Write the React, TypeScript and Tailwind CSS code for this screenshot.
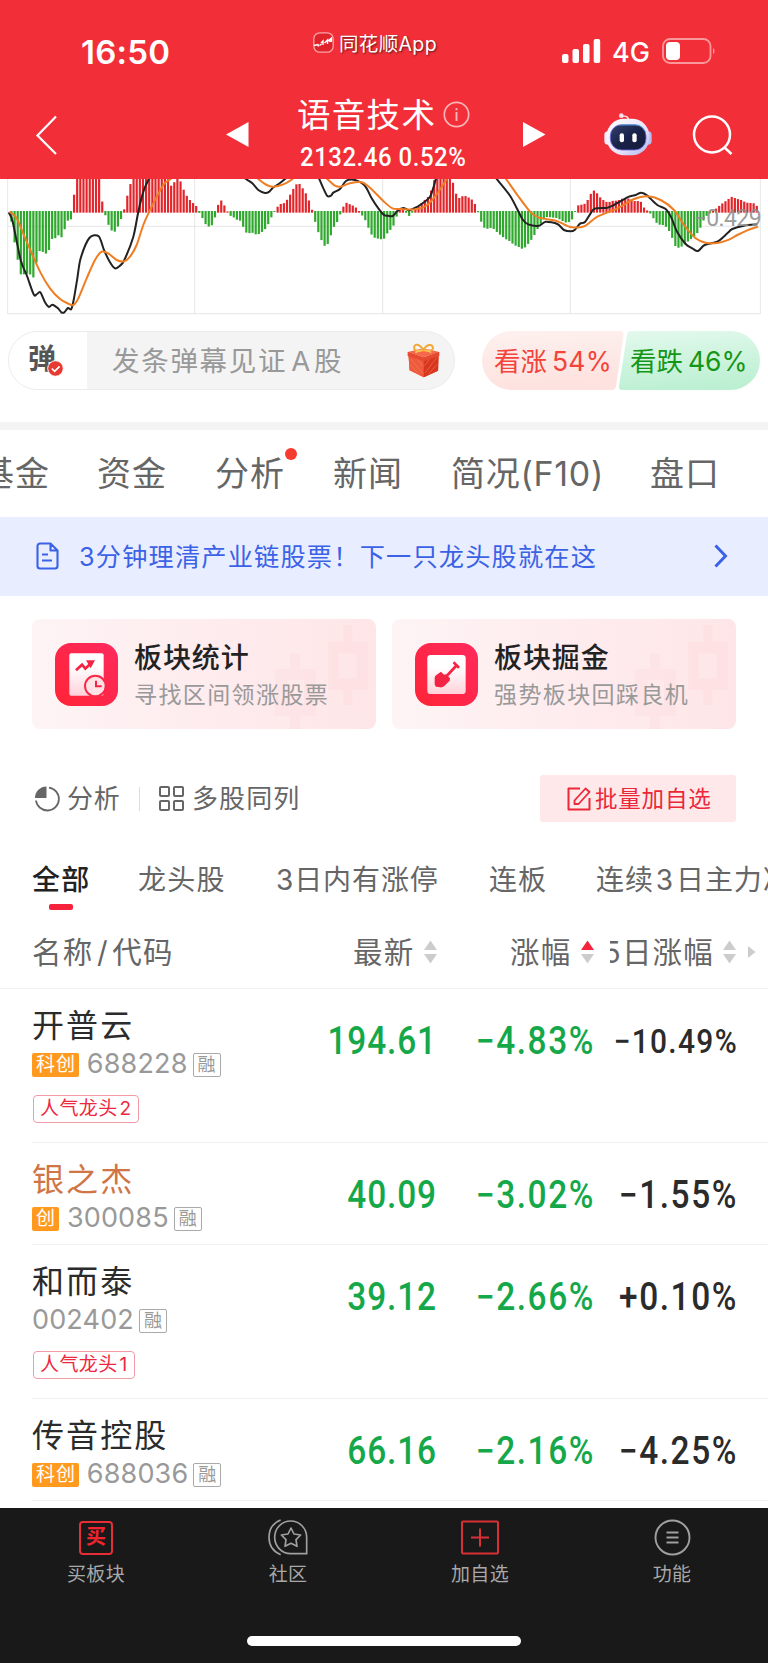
import React from 'react';

/* MACD histogram samples as [x, y] pairs; the zero line sits at y = 110. */
const HISTOGRAM: number[] = [
  34,140,43,200,52,250,61,298,71,298,80,296,90,298,99,311,108,268,117,228,127,230,137,236,146,228,155,192,165,190,174,180,183,190,193,165,202,137,212,137,
  220,75,229,0,296,0,305,73,315,118,324,147,333,165,342,173,352,158,361,137,370,113,380,68,389,35,398,0,500,0,510,33,520,30,529,0,538,10,548,38,557,58,567,72,576,83,586,87,595,110,
  604,122,614,145,623,154,632,156,642,140,651,97,661,73,670,86,680,105,689,122,698,124,708,135,717,132,727,150,736,172,746,175,755,172,765,178,775,178,784,172,793,165,802,153,812,130,821,115,
  828,102,838,87,848,87,857,80,867,65,876,48,885,32,895,22,904,35,914,48,924,70,933,93,942,128,951,162,960,185,970,210,979,216,989,193,998,160,1008,148,1017,128,
  1026,103,1036,82,1045,86,1055,90,1064,95,1073,102,1083,118,1092,128,1101,147,1110,172,1120,187,1130,190,1139,192,1150,194,1156,185,1166,167,1176,162,1185,140,1194,110,1204,100,1214,105,1223,125,1232,120,
  1242,105,1252,97,1262,88,1270,78,1280,70,1289,60,1298,30,1307,0,1352,0,1363,38,1372,70,1382,68,1391,60,1401,66,1410,69,1419,77,1429,95,1438,126,1447,150,1456,163,1466,160,1475,158,1485,165,1494,175,
  1504,182,1513,190,1522,195,1532,200,1541,210,1550,213,1560,218,1569,223,1579,213,1588,202,1597,190,1607,173,1616,155,1626,140,1635,128,1645,125,1654,128,1664,128,1673,130,1683,136,1692,140,1700,144,1709,140,1719,130,
  1728,102,1737,87,1747,90,1756,85,1766,70,1775,50,1785,45,1794,60,1803,70,1812,77,1822,82,1832,80,1842,76,1852,78,1862,72,1872,70,1882,70,1892,72,1902,78,1912,78,1922,80,1932,98,1942,107,
  1952,117,1962,133,1972,147,1982,150,1992,150,2002,160,2012,176,2022,205,2029,220,2039,217,2049,213,2059,203,2069,195,2079,188,2089,177,2095,170,2104,152,2113,130,2122,120,2132,113,
  2142,105,2152,98,2162,88,2172,82,2182,74,2196,65,2206,70,2216,73,2226,76,2236,82,2246,84,2256,84,2266,86,2272,96,
];

const ZERO = 110;
const PITCH = 9.395;

function sample(x: number): number {
  for (let i = 2; i < HISTOGRAM.length; i += 2) {
    if (HISTOGRAM[i] >= x) {
      const x0 = HISTOGRAM[i - 2];
      const y0 = HISTOGRAM[i - 1];
      const t = (x - x0) / (HISTOGRAM[i] - x0);
      return y0 + (HISTOGRAM[i + 1] - y0) * t;
    }
  }
  return 96;
}

/* Smooth polyline through points (Catmull-Rom to Bezier). */
function curve(p: number[]): string {
  const n = p.length / 2;
  const at = (i: number) => {
    const k = Math.max(0, Math.min(n - 1, i));
    return [p[k * 2], p[k * 2 + 1]];
  };
  let d = `M${p[0]} ${p[1]}`;
  for (let i = 0; i < n - 1; i++) {
    const [a, b, c, e] = [at(i - 1), at(i), at(i + 1), at(i + 2)];
    d += `C${b[0] + (c[0] - a[0]) / 7} ${b[1] + (c[1] - a[1]) / 7} ${c[0] - (e[0] - b[0]) / 7} ${c[1] - (e[1] - b[1]) / 7} ${c[0]} ${c[1]}`;
  }
  return d;
}

const DIF: number[][] = [
  [26,112,38,140,62,255,80,300,101,358,110,358,121,352,135,382,147,396,157,389,174,400,184,412,193,412,204,399,214,402,222,370,232,310,242,250,268,189,296,184,312,225,330,262,345,280,360,272,373,255,400,185,415,110,430,50,445,15,455,0],
  [725,0,738,12,757,25,775,45,795,54,808,50,820,37,835,28,855,12,870,2],
  [953,0,958,12,970,40,982,63,993,62,1000,53,1020,42,1038,18,1060,14,1085,24,1100,40,1115,70,1135,100,1152,120,1164,122,1178,123,1194,106,1210,99,1227,106,1242,100,1260,90,1290,65,1307,14,1312,0],
  [1480,0,1490,12,1532,65,1567,132,1585,148,1617,152,1637,140,1672,147,1692,165,1712,169,1724,165,1740,146,1754,142,1770,118,1784,101,1822,98,1842,90,1887,65,1907,60,1924,53,1942,62,1972,90,1997,102,2014,128,2032,172,2057,207,2077,220,2094,228,2114,210,2152,200,2182,175,2197,162,2232,152,2272,148],
];
const DEA: number[][] = [
  [28,110,50,130,80,200,120,290,150,340,180,372,205,386,220,390,235,370,260,310,285,255,305,230,325,235,350,255,372,259,390,245,410,210,430,150,455,95,490,30,512,12,520,2],
  [765,0,775,12,800,30,820,35,850,28,875,14,890,0],
  [970,0,982,12,1005,32,1022,35,1050,25,1085,22,1110,38,1152,80,1177,100,1202,102,1247,103,1282,90,1312,55,1340,12,1346,0],
  [1506,0,1518,12,1552,60,1592,112,1617,128,1662,136,1682,143,1712,156,1752,154,1792,125,1852,100,1902,72,1942,64,1982,75,2022,105,2052,150,2087,190,2117,203,2152,204,2187,194,2212,180,2242,166,2274,155],
];

function MacdChart() {
  const bars = Array.from({ length: 239 }, (_, i) => 34 + i * PITCH);
  return (
    <div className="relative h-[136px] w-full shrink-0 overflow-hidden bg-white">
      <svg className="block" width="768" height="136" viewBox="0 12 2304 408">
        <path d="M23 0V416H2281V0M584 0V416M1148 0V416M1711 0V416M23 154H2281" fill="none" stroke="#e6e6e6" strokeWidth="3" />
        {bars.map((x, i) => {
          const y = sample(x);
          const up = y < ZERO;
          return (
            <rect
              key={i}
              x={x - 3}
              y={up ? y : ZERO - 2}
              width="6.6"
              height={up ? ZERO + 3 - y : y - ZERO + 2}
              fill={up ? '#e2252b' : '#2fa82d'}
            />
          );
        })}
        {DIF.map((p, i) => (
          <path key={i} d={curve(p)} fill="none" stroke="#222" strokeWidth="6" strokeLinejoin="round" />
        ))}
        {DEA.map((p, i) => (
          <path key={i} d={curve(p)} fill="none" stroke="#ef7d22" strokeWidth="6" strokeLinejoin="round" />
        ))}
      </svg>
      <span className="absolute right-[7px] top-[28px] font-['Roboto',sans-serif] text-[23px] leading-6 tracking-[-0.6px] text-[#8f8f8f]/90">−0.429</span>
    </div>
  );
}

function Robot() {
  return (
    <svg width="48" height="46" viewBox="0 0 144 138" className="block">
      <defs>
        <linearGradient id="rb" x1="0" y1="0" x2="1" y2="1">
          <stop offset="0" stopColor="#fff" />
          <stop offset=".6" stopColor="#e9e2fa" />
          <stop offset="1" stopColor="#a9b4ee" />
        </linearGradient>
        <linearGradient id="rf" x1="0" y1="0" x2="1" y2="1">
          <stop offset="0" stopColor="#33406e" />
          <stop offset=".5" stopColor="#1a2348" />
          <stop offset="1" stopColor="#141a3a" />
        </linearGradient>
      </defs>
      <circle cx="52" cy="11" r="7" fill="#fbdfe8" />
      <path d="M54 13q20-4 20 14" fill="none" stroke="#fbe6ee" strokeWidth="4" />
      <rect x="1" y="58" width="22" height="40" rx="11" fill="#f3ecfa" />
      <rect x="121" y="58" width="22" height="40" rx="11" fill="#b9bdf3" />
      <rect x="8" y="20" width="128" height="110" rx="52" fill="url(#rb)" />
      <rect x="19" y="38" width="107" height="76" rx="34" fill="url(#rf)" stroke="#6f6be0" strokeWidth="2.5" />
      <path d="M46 39h50q18 1 26 16" fill="none" stroke="#4bb8e0" strokeWidth="2" />
      <rect x="47" y="64" width="13" height="27" rx="6" fill="#fff" />
      <rect x="85" y="64" width="13" height="27" rx="6" fill="#fff" />
    </svg>
  );
}

function TopBar() {
  return (
    <header className="flex h-[179px] shrink-0 flex-col bg-[#f22f38] text-white">
      <div className="flex h-[86px] shrink-0 items-start">
        <span className="ml-[81px] mt-[32px] w-[232px] text-[33px] font-semibold leading-10 tracking-[0.2px]">16:50</span>
        <svg className="mt-[32px] block" width="21" height="21" viewBox="0 0 21 21">
          <rect x="0.8" y="0.8" width="19.4" height="19.4" rx="6" fill="#e0222b" stroke="#f9a3a6" strokeWidth="1.3" />
          <path d="M1 13.5l4-1 .6 2M6.500 13.500l2-1.500M8 11l2-2v4M11.500 11l3-3v4M15 9l3.500-3v3.500" fill="none" stroke="#fff" strokeWidth="1.400" />
          <path d="M16 7h3v3h-3z" fill="#fff" />
        </svg>
        <span className="ml-[5px] mt-[30px] w-[217px] whitespace-nowrap text-[19.500px] leading-7 tracking-[0.350px] [text-shadow:1px_1px_2px_rgba(0,0,0,0.600)]">同花顺App</span>
        <svg className="ml-[6px] mt-[39px] block" width="39" height="25" viewBox="0 0 39 25" fill="#fff">
          <rect x="0" y="15" width="6.500" height="9" rx="2" />
          <rect x="10.500" y="10" width="6.500" height="14" rx="2" />
          <rect x="21" y="5" width="6.500" height="19" rx="2" />
          <rect x="31.700" y="0" width="6.500" height="24" rx="2" />
        </svg>
        <span className="ml-[11px] mt-[37px] w-[50px] text-[27px] font-medium leading-8">4G</span>
        <svg className="mt-[38px] block" width="54" height="26" viewBox="0 0 54 26">
          <rect x="1" y="1" width="47.500" height="24" rx="7" fill="none" stroke="#f9979b" strokeWidth="1.800" />
          <rect x="4" y="4" width="14" height="18" rx="4" fill="#fff" />
          <path d="M51 9.500q3 3.500 0 7z" fill="#f9979b" />
        </svg>
      </div>
      <div className="flex h-[93px] items-start">
        <svg className="ml-[35px] mt-[29px] block" width="24" height="40" viewBox="0 0 24 40">
          <path d="M21 1.500L2.500 20.500 21 39" fill="none" stroke="#fff" strokeWidth="2.200" />
        </svg>
        <svg className="ml-[167px] mt-[36px] block" width="23" height="25" viewBox="0 0 23 25">
          <path d="M0 12.500L22.500 0v25z" fill="#fff" />
        </svg>
        <div className="ml-[48px] flex w-[175px] flex-col">
          <div className="flex h-[56px] items-start">
            <span className="mt-[5px] whitespace-nowrap text-[33.500px] leading-[48px] tracking-[1.300px]">语音技术</span>
            <svg className="ml-[7px] mt-[15px] block shrink-0" width="27" height="27" viewBox="0 0 27 27" fill="none" stroke="#fbb4b7" strokeWidth="1.700">
              <circle cx="13.500" cy="13.500" r="12.200" />
              <path d="M13.500 11v9M13.500 7v2.300" strokeWidth="1.900" />
            </svg>
          </div>
          <span className="ml-[3px] mt-[-1px] w-max origin-left scale-x-[0.92] whitespace-nowrap font-['Roboto',sans-serif] text-[26px] font-medium leading-8 tracking-[0.600px]">2132.46 0.52%</span>
        </div>
        <svg className="ml-[51px] mt-[36px] block" width="23" height="25" viewBox="0 0 23 25">
          <path d="M22.500 12.500L0 0v25z" fill="#fff" />
        </svg>
        <div className="ml-[58px] mt-[26px]"><Robot /></div>
        <svg className="ml-[40px] mt-[28px] block" width="42" height="42" viewBox="0 0 42 42" fill="none" stroke="#fff" strokeWidth="2.500">
          <circle cx="20" cy="20.500" r="18" />
          <path d="M32 33l7.500 7" />
        </svg>
      </div>
    </header>
  );
}

function Gift() {
  return (
    <svg width="33" height="35" viewBox="0 0 102 108" className="block">
      <path d="M4 28L52 46 98 28 96 86 52 106 8 84z" fill="#e8442f" />
      <path d="M4 28L52 46v60L8 84z" fill="#ee5a3d" />
      <path d="M52 46L98 28l-2 58-44 20z" fill="#d9361f" />
      <path d="M12 50l38 45M10 66l30 34M24 42l26 30" stroke="#f4734c" strokeWidth="3" />
      <path d="M92 45L56 92M93 66L66 96M76 42L54 70" stroke="#e85f40" strokeWidth="3" />
      <path d="M2 28L50 16l50 12-48 16z" fill="#f6684a" />
      <path d="M2 28L52 44 100 28v12L52 56 2 40z" fill="#e5492f" />
      <path d="M50 22C40 2 22 0 22 14s16 12 28 8c12 4 32 4 30-8S62 2 50 22z" fill="none" stroke="#f2a733" strokeWidth="6" />
      <path d="M48 22q-16 2-22 8M54 22q16 2 20 8" stroke="#f7c35a" strokeWidth="5" fill="none" />
    </svg>
  );
}

function DanmakuRow() {
  return (
    <div className="flex h-[107px] shrink-0 items-start bg-white pl-[8px] pt-[16px]">
      <div className="flex h-[59px] w-[447px] items-center overflow-hidden rounded-full border border-[#ececec] bg-[#f4f4f4]">
        <div className="relative flex h-full w-[78px] items-center bg-white pl-[19px]">
          <span className="pb-[4px] text-[28px] font-bold leading-8 text-[#555]">弹</span>
          <svg className="absolute left-[38px] top-[28px]" width="17" height="17" viewBox="0 0 17 17">
            <circle cx="8.500" cy="8.500" r="7.800" fill="#e63a32" stroke="#fff" strokeWidth="1" />
            <path d="M4.800 8.500l2.800 2.800 5-5" fill="none" stroke="#fff" strokeWidth="1.700" />
          </svg>
        </div>
        <span className="ml-[25px] w-[295px] whitespace-nowrap text-[27.500px] leading-10 tracking-[1.700px] text-[#999]">发条弹幕见证<span className="ml-[4px] mr-[2px]">A</span>股</span>
        <Gift />
      </div>
      <div className="ml-[27px] flex h-[59px] w-[278px]">
        <div className="relative flex w-[139px] items-center">
          <svg className="absolute left-0 top-0" width="143" height="59" viewBox="0 0 143 59">
            <defs>
              <linearGradient id="up" x1="0" y1="0" x2="0.200" y2="1"><stop stopColor="#fdf1ef" /><stop offset="1" stopColor="#fde2df" /></linearGradient>
            </defs>
            <path d="M29.500 0H138q4 0 3.500 4L134 55q-.6 4-4.600 4H29.500a29.500 29.500 0 010-59z" fill="url(#up)" />
          </svg>
          <span className="relative ml-[12px] whitespace-nowrap text-[26.500px] leading-10 text-[#f2443a]">看涨<span className="ml-[5px] tracking-[0.2px]">54%</span></span>
        </div>
        <div className="relative flex w-[139px] items-center">
          <svg className="absolute left-[-2px] top-0" width="141" height="59" viewBox="0 0 141 59">
            <defs>
              <linearGradient id="dn" x1="0" y1="0" x2="0.200" y2="1"><stop stopColor="#e3f9ed" /><stop offset="1" stopColor="#bdf0d3" /></linearGradient>
            </defs>
            <path d="M12 0H111.500a29.500 29.500 0 010 59H4q-4.500 0-4-4L8 4q.6-4 4-4z" fill="url(#dn)" />
          </svg>
          <span className="relative ml-[9px] whitespace-nowrap text-[26.500px] leading-10 text-[#169616]">看跌<span className="ml-[5px]">46%</span></span>
        </div>
      </div>
    </div>
  );
}

function MainTabs() {
  return (
    <nav className="flex h-[87px] shrink-0 items-center overflow-hidden whitespace-nowrap bg-white text-[34px] tracking-[1px] text-[#666]">
      <span className="-ml-[20px] w-[117px] shrink-0">基金</span>
      <span className="w-[118px] shrink-0">资金</span>
      <span className="relative w-[118px] shrink-0">分析<i className="absolute left-[70px] top-0 size-[12px] rounded-full bg-[#f63c31]" /></span>
      <span className="w-[118px] shrink-0">新闻</span>
      <span className="w-[199px] shrink-0 tracking-[0.700px]">简况(F10)</span>
      <span className="shrink-0">盘口</span>
    </nav>
  );
}

function Banner() {
  return (
    <div className="flex h-[79px] shrink-0 items-center bg-[#e8eeff] text-[#3b62e6]">
      <svg className="ml-[36px] mt-[-1px] block" width="23" height="28" viewBox="0 0 23 28" fill="none" stroke="currentColor" strokeWidth="2.1" strokeLinejoin="round">
        <path d="M14.500 1.500H4a2.500 2.500 0 00-2.500 2.500v20A2.500 2.500 0 004 26.500h15a2.500 2.500 0 002.500-2.500V8.500zM14.500 1.500v7h7M6 12.500h6M6 18.500h10" />
      </svg>
      <span className="ml-[20px] w-[635px] whitespace-nowrap text-[25.200px] leading-9 tracking-[1.200px]">3分钟理清产业链股票！下一只龙头股就在这</span>
      <svg className="mt-[-2px] block" width="14" height="24" viewBox="0 0 14 24" fill="none" stroke="currentColor" strokeWidth="3">
        <path d="M1.500 1.500L11.500 12 1.500 22.500" />
      </svg>
    </div>
  );
}

function Candles() {
  return (
    <svg className="absolute inset-0" width="344" height="110" viewBox="96 327 1032 330" fill="#f8bcc1" fillRule="evenodd">
      <path opacity=".13" d="M1030 345h27v50h48v145h-48v45h-27v-45h-45V395h45zM1015 430v75h55v-75z" />
      <path opacity=".1" d="M870 430h30v47h48v141h-48v39h-30v-39h-45V477h45zM862 510v72h50v-72z" />
    </svg>
  );
}

function IconTile({ children }: { children: React.ReactNode }) {
  return (
    <svg className="relative block shrink-0" width="63" height="63" viewBox="0 0 189 189">
      <defs>
        <linearGradient id="tile" x1="0" y1="1" x2="1" y2="0"><stop stopColor="#fe2436" /><stop offset="1" stopColor="#ff2a5e" /></linearGradient>
        <linearGradient id="paper" x1="0" y1="0" x2="0" y2="1"><stop offset=".3" stopColor="#fff" /><stop offset="1" stopColor="#ffd3da" /></linearGradient>
      </defs>
      <rect width="189" height="189" rx="48" fill="url(#tile)" />
      {children}
    </svg>
  );
}

function FeatureCard({ title, sub, icon }: { title: string; sub: string; icon: React.ReactNode }) {
  return (
    <div className="relative flex h-[110px] w-[344px] overflow-hidden rounded-lg bg-gradient-to-r from-[#fef4f5] via-[#feecee] to-[#fee6e8] pl-[23px] pt-[24px]">
      <Candles />
      <IconTile>{icon}</IconTile>
      <div className="relative ml-[16px] mt-[-5px] flex flex-col whitespace-nowrap">
        <span className="text-[28px] font-medium leading-[40px] tracking-[0.900px] text-[#222]">{title}</span>
        <span className="mt-[-1px] text-[23px] leading-[36px] tracking-[1.400px] text-[#999]">{sub}</span>
      </div>
    </div>
  );
}

function FeatureCards() {
  return (
    <div className="flex h-[156px] shrink-0 gap-4 px-8 pt-[23px]">
      <FeatureCard
        title="板块统计"
        sub="寻找区间领涨股票"
        icon={
          <>
            <rect x="43" y="31" width="103" height="127" rx="6" fill="url(#paper)" />
            <path d="M63 82l18-17 10 12 20-19" fill="none" stroke="#f52343" strokeWidth="8" />
            <path d="M93 52h27l-13 24z" fill="#f52343" />
            <circle cx="121" cy="129" r="31" fill="#ffe1e6" stroke="#f92846" strokeWidth="6" />
            <path d="M123 113v17h17" fill="none" stroke="#f52343" strokeWidth="6" />
          </>
        }
      />
      <FeatureCard
        title="板块掘金"
        sub="强势板块回踩良机"
        icon={
          <>
            <rect x="37" y="36" width="115" height="117" rx="10" fill="url(#paper)" />
            <path d="M95 99l28-30" stroke="#f52343" strokeWidth="8" />
            <path d="M113 61l5-6 17 16-6 6z" fill="#f52343" />
            <path d="M78 86l9 9 6-1 12 12-1 7-17 17q-5 4-12 3l-12-2q-5-2-4-12v-14q0-5 4-8z" fill="#f52343" />
          </>
        }
      />
    </div>
  );
}

function Toolbar() {
  return (
    <div className="flex h-[47px] shrink-0 items-center text-[26px] text-[#666]">
      <svg className="ml-[34px] block" width="27" height="28" viewBox="0 0 27 28">
        <path d="M12.500 1.500V13H1A11.500 11.500 0 0112.500 1.500z" fill="#666" />
        <path d="M15 2.600A11.500 11.500 0 1 1 2 15.500" fill="none" stroke="#666" strokeWidth="1.800" />
      </svg>
      <span className="ml-[6px] w-[72px] tracking-[0.700px]">分析</span>
      <i className="h-[24px] w-px bg-[#ddd]" />
      <svg className="ml-[19px] block" width="25" height="25" viewBox="0 0 25 25" fill="none" stroke="#666" strokeWidth="2">
        <rect x="1" y="1" width="9" height="9" rx="1" />
        <rect x="15" y="1" width="9" height="9" rx="1" />
        <rect x="1" y="15" width="9" height="9" rx="1" />
        <rect x="15" y="15" width="9" height="9" rx="1" />
      </svg>
      <span className="ml-[8px] w-[348px] tracking-[1.1px]">多股同列</span>
      <button className="flex h-[47px] w-[196px] items-center rounded-[3px] bg-[#fee8e9] pl-[26px] text-[#ec2739]">
        <svg className="block" width="26" height="26" viewBox="0 0 26 26" fill="none" stroke="currentColor" strokeWidth="2" strokeLinejoin="round">
          <path d="M14 2.500H2.500v21h21V12" />
          <path d="M8.500 14.500L19.500 2.500l4 3.500-11 12H8.500z" strokeWidth="1.800" />
        </svg>
        <span className="ml-[3px] whitespace-nowrap text-[22.500px] tracking-[0.800px]">批量加自选</span>
      </button>
    </div>
  );
}

function FilterTabs() {
  return (
    <div className="flex h-[97px] shrink-0 items-start overflow-hidden whitespace-nowrap pt-[38px] text-[28px] leading-[40px] tracking-[0.900px] text-[#666]">
      <div className="ml-[32px] flex w-[106px] shrink-0 flex-col">
        <span className="font-medium tracking-[1.2px] text-[#222]">全部</span>
        <i className="ml-[17px] mt-[4px] h-[6px] w-[24px] rounded-[2px] bg-[#f7223b]" />
      </div>
      <span className="w-[138px] shrink-0 tracking-[1.2px]">龙头股</span>
      <span className="w-[213px] shrink-0">3日内有涨停</span>
      <span className="w-[107px] shrink-0">连板</span>
      <span className="shrink-0">连续<span className="mx-[2px]">3</span>日主力净流入</span>
    </div>
  );
}

function SortArrows({ active = false }: { active?: boolean }) {
  return (
    <svg className="block shrink-0" width="13" height="24" viewBox="0 0 13 24">
      <path d="M6.500 0.500L13 10H0z" fill={active ? '#f7223b' : '#ccc'} />
      <path d="M6.500 23.500L13 14H0z" fill="#ccc" />
    </svg>
  );
}

function TableHead() {
  return (
    <div className="flex h-[70px] shrink-0 items-center whitespace-nowrap border-b border-[#f0f0f0] pb-[3px] text-[29.500px] leading-[44px] tracking-[1.2px] text-[#666]">
      <span className="ml-[32px] w-[321px]">名称<span className="mx-[3.500px]">/</span>代码</span>
      <span className="w-[71px]">最新</span>
      <SortArrows />
      <span className="ml-[73px] w-[71px]">涨幅</span>
      <SortArrows active />
      <div className="ml-[16px] flex w-[104px] justify-end overflow-hidden">5日涨幅</div>
      <div className="ml-[9px]"><SortArrows /></div>
      <svg className="ml-[12px] block" width="8" height="12" viewBox="0 0 8 12"><path d="M0 0l7.500 6L0 12z" fill="#ccc" /></svg>
    </div>
  );
}

interface Stock {
  name: string;
  code: string;
  board?: string;
  badge?: string;
  price: string;
  change: string;
  five: string;
  held?: boolean;
  long?: boolean;
}

const STOCKS: Stock[] = [
  { name: '开普云', code: '688228', board: '科创', badge: '人气龙头2', price: '194.61', change: '−4.83%', five: '−10.49%', long: true },
  { name: '银之杰', code: '300085', board: '创', price: '40.09', change: '−3.02%', five: '−1.55%', held: true },
  { name: '和而泰', code: '002402', badge: '人气龙头1', price: '39.12', change: '−2.66%', five: '+0.10%' },
  { name: '传音控股', code: '688036', board: '科创', price: '66.16', change: '−2.16%', five: '−4.25%' },
];

function StockRow({ s }: { s: Stock }) {
  return (
    <div className={`ml-8 flex shrink-0 border-b border-[#f0f0f0] ${s.badge ? 'h-[154px]' : 'h-[102px]'}`}>
      <div className="flex w-[254px] shrink-0 flex-col items-start pt-[13px]">
        <span className={`whitespace-nowrap text-[32px] leading-[48px] tracking-[2.100px] ${s.held ? 'text-[#d07545]' : 'text-[#2b2b2b]'}`}>{s.name}</span>
        <div className="mt-[2px] flex h-[25px] items-center">
          {s.board && (
            <span className="mr-[8px] flex h-[24px] items-center rounded-[2px] bg-[#ff9a1e] pl-[4px] pr-[3px] text-[19px] leading-[24px] tracking-[0.900px] text-white">{s.board}</span>
          )}
          <span className="mt-[-2px] text-[27px] leading-[26px] tracking-[0.150px] text-[#999]">{s.code}</span>
          <span className="ml-[5px] flex h-[24px] w-[28px] items-center justify-center rounded-[2px] border border-[#aaa] text-[18px] leading-[22px] text-[#999]">融</span>
        </div>
        {s.badge && (
          <span className="ml-[1px] mt-[18px] flex h-[28px] items-center whitespace-nowrap rounded-[4px] border border-[#f29aa5] px-[6px] text-[19px] leading-[26px] tracking-[0.400px] text-[#ee2741]">
            {s.badge.slice(0, 4)}
            <span className="ml-[2px]">{s.badge.slice(4)}</span>
          </span>
        )}
      </div>
      <div className="flex h-[104px] items-center whitespace-nowrap text-right font-['Roboto',sans-serif] text-[38px] font-medium">
        <span className="w-[151px] origin-right scale-x-[0.88] tracking-[1px] text-[#14a84b]">{s.price}</span>
        <span className="w-[158px] origin-right scale-x-[0.88] tracking-[1.800px] text-[#14a84b]">{s.change}</span>
        <span className={`w-[143px] origin-right scale-x-[0.88] text-[#2b2b2b] ${s.long ? 'text-[34px] tracking-[1.500px]' : 'tracking-[1.800px]'}`}>{s.five}</span>
      </div>
    </div>
  );
}

function BottomNav() {
  return (
    <footer className="flex h-[155px] shrink-0 flex-col bg-[#191919] text-[19px] text-[#a8a8a8]">
      <div className="grid h-[128px] grid-cols-4 pt-[11px]">
        <div className="flex flex-col items-center">
          <div className="flex h-[37px] items-center">
            <span className="flex size-[34px] items-center justify-center rounded-[4px] border-2 border-[#e52e36] pb-[1px] text-[20px] font-bold leading-5 text-[#f0242f]">买</span>
          </div>
          <span className="mt-[5px] leading-7 tracking-[0.300px]">买板块</span>
        </div>
        <div className="flex flex-col items-center">
          <svg className="block" width="40" height="37" viewBox="0 0 120 111" fill="none" stroke="#a0a0a0" strokeWidth="5">
            <path d="M116 104V55a48 49 0 10-48 49z" />
            <path d="M38 3Q3 17 3 55t35 52" />
            <path d="M69 27l9 18 20 3-14 14 3 20-18-9-18 9 3-20-14-14 20-3z" strokeLinejoin="round" />
          </svg>
          <span className="mt-[5px] leading-7 tracking-[0.300px]">社区</span>
        </div>
        <div className="flex flex-col items-center">
          <svg className="block" width="38" height="37" viewBox="0 0 38 37" fill="none" stroke="#d93036" strokeWidth="2">
            <rect x="1" y="2.500" width="36" height="32" rx="1" />
            <path d="M19 9.500v18M10 18.500h18" />
          </svg>
          <span className="mt-[5px] leading-7 tracking-[0.300px]">加自选</span>
        </div>
        <div className="flex flex-col items-center">
          <svg className="block" width="37" height="37" viewBox="0 0 37 37" fill="none" stroke="#a0a0a0" strokeWidth="1.900">
            <circle cx="18.500" cy="18.500" r="17" />
            <path d="M12.500 13.500h12M12.500 18.500h12M12.500 23.500h12" />
          </svg>
          <span className="mt-[5px] leading-7 tracking-[0.300px]">功能</span>
        </div>
      </div>
      <div className="mx-auto h-[10px] w-[274px] rounded-full bg-white" />
    </footer>
  );
}

export default function App() {
  return (
    <div className="flex h-[1663px] w-[768px] flex-col overflow-hidden bg-white font-['Inter','Noto_Sans_CJK_SC',sans-serif]">
      <TopBar />
      <MacdChart />
      <DanmakuRow />
      <div className="h-[8px] shrink-0 bg-[#f4f4f4]" />
      <MainTabs />
      <Banner />
      <FeatureCards />
      <div className="h-[23px] shrink-0" />
      <Toolbar />
      <FilterTabs />
      <TableHead />
      <main className="flex h-[519px] shrink-0 flex-col overflow-hidden">
        {STOCKS.map((s) => (
          <StockRow key={s.code} s={s} />
        ))}
      </main>
      <BottomNav />
    </div>
  );
}
